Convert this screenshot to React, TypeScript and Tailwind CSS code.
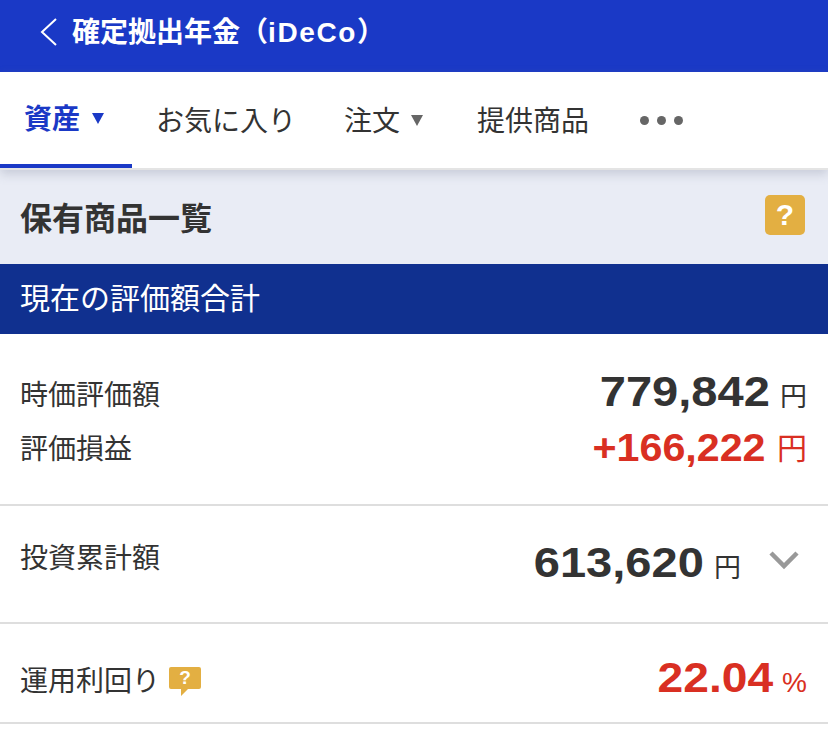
import React from 'react';

const fontStack = "font-['Liberation_Sans','Noto_Sans_CJK_JP',sans-serif]";

const HelpBadge: React.FC = () => (
  <div className="flex h-10 w-10 items-center justify-center rounded-[5px] bg-[#e3af42] text-[30px] leading-none font-bold text-white">?</div>
);

const HelpBubble: React.FC = () => (
  <svg width="32" height="29" viewBox="0 0 32 29" className="ml-[9px]">
    <path d="M2 0H30A2 2 0 0 1 32 2V20A2 2 0 0 1 30 22H19L12 29V22H2A2 2 0 0 1 0 20V2A2 2 0 0 1 2 0Z" fill="#e3af42" />
    <text x="16" y="17" textAnchor="middle" fontSize="19" fontWeight="700" fill="#fff" fontFamily="Liberation Sans">?</text>
  </svg>
);

const App: React.FC = () => {
  return (
    <div className={`h-[734px] w-[828px] overflow-hidden bg-white text-[#333] ${fontStack}`}>
      {/* Header */}
      <div className="flex h-[72px] items-center bg-[#1a39c6] pb-[8px] pl-[38px] text-white">
        <svg width="20" height="28" viewBox="0 0 20 28" fill="none" stroke="#fff" strokeWidth="2">
          <path d="M18 1L4 14L18 27" />
        </svg>
        <span className="mt-[2px] ml-[14px] text-[28px] leading-none font-bold">
          確定拠出年金（<span className="tracking-[1.6px]">iDeCo</span>）
        </span>
      </div>

      {/* Tabs */}
      <div className="relative z-10 flex h-[98px] border-b-2 border-[#e4e4e4] bg-white shadow-[0_4px_10px_rgba(120,125,150,0.3)]">
        <div className="flex h-[96px] w-[132px] items-center justify-center gap-[12px] border-b-4 border-[#1a39c6] pr-[4px] text-[#1a39c6]">
          <span className="mt-[4px] text-[28px] leading-none font-bold">資産</span>
          <span className="mt-[1px] h-0 w-0 border-x-[6px] border-t-[11px] border-x-transparent border-t-[#1a39c6]" />
        </div>
        <div className="flex h-[96px] items-center pt-[4px] pl-[24px] text-[28px] leading-none">お気に入り</div>
        <div className="flex h-[96px] items-center gap-[11px] pl-[48px]">
          <span className="mt-[4px] text-[28px] leading-none">注文</span>
          <span className="h-0 w-0 border-x-[6px] border-t-[11px] border-x-transparent border-t-[#666]" />
        </div>
        <div className="flex h-[96px] items-center pt-[4px] pl-[54px] text-[28px] leading-none">提供商品</div>
        <div className="flex h-[96px] items-center gap-[8px] pl-[51px]">
          <span className="h-[9px] w-[9px] rounded-full bg-[#666]" />
          <span className="h-[9px] w-[9px] rounded-full bg-[#666]" />
          <span className="h-[9px] w-[9px] rounded-full bg-[#666]" />
        </div>
      </div>

      {/* Section title */}
      <div className="flex h-[94px] items-center justify-between bg-[#e9ecf5] pr-[23px] pl-[20px]">
        <h1 className="mt-[4px] text-[32px] leading-none font-bold">保有商品一覧</h1>
        <div className="-mt-[4px]">
          <HelpBadge />
        </div>
      </div>

      <div className="flex h-[70px] items-center bg-[#10308f] pl-[20px] text-[30px] leading-none text-white">現在の評価額合計</div>

      {/* Valuation rows */}
      <div className="h-[172px] border-b-2 border-[#dedede] pt-[30px] pr-[21px] pl-[20px]">
        <div className="flex h-[56px] items-center justify-between">
          <span className="mt-[8px] text-[28px] leading-none">時価評価額</span>
          <div className="flex items-baseline">
            <span className="origin-right scale-x-[1.12] text-[42px] leading-none font-bold">779,842</span>
            <span className="ml-[10px] text-[27px] leading-none">円</span>
          </div>
        </div>
        <div className="flex h-[56px] items-center justify-between">
          <span className="mt-[4px] text-[28px] leading-none">評価損益</span>
          <div className="flex items-baseline text-[#d92f22]">
            <span className="origin-right scale-x-[1.085] text-[38px] leading-none font-bold">+166,222</span>
            <span className="ml-[11px] -translate-y-[2px] text-[30px] leading-none">円</span>
          </div>
        </div>
      </div>

      <div className="flex h-[118px] items-start justify-between border-b-2 border-[#dedede] pt-[32px] pr-[29px] pl-[20px]">
        <span className="mt-[7px] text-[28px] leading-none">投資累計額</span>
        <div className="flex items-center">
          <div className="flex items-baseline">
            <span className="origin-right scale-x-[1.12] text-[42px] leading-[50px] font-bold">613,620</span>
            <span className="ml-[10px] text-[27px] leading-none">円</span>
          </div>
          <svg width="30" height="20" viewBox="0 0 30 20" fill="none" stroke="#999" strokeWidth="4.5" className="mb-[6px] ml-[28px]">
            <path d="M2 3L15 16L28 3" />
          </svg>
        </div>
      </div>

      <div className="flex h-[100px] items-center justify-between border-b-2 border-[#dedede] pr-[21px] pl-[20px]">
        <div className="mt-[16px] flex items-center">
          <span className="mt-[2px] text-[28px] leading-none">運用利回り</span>
          <HelpBubble />
        </div>
        <div className="mt-[10px] flex items-baseline text-[#d92f22]">
          <span className="origin-right scale-x-[1.1] text-[42px] leading-none font-bold">22.04</span>
          <span className="ml-[9px] text-[28px] leading-none">%</span>
        </div>
      </div>
    </div>
  );
};

export default App;
